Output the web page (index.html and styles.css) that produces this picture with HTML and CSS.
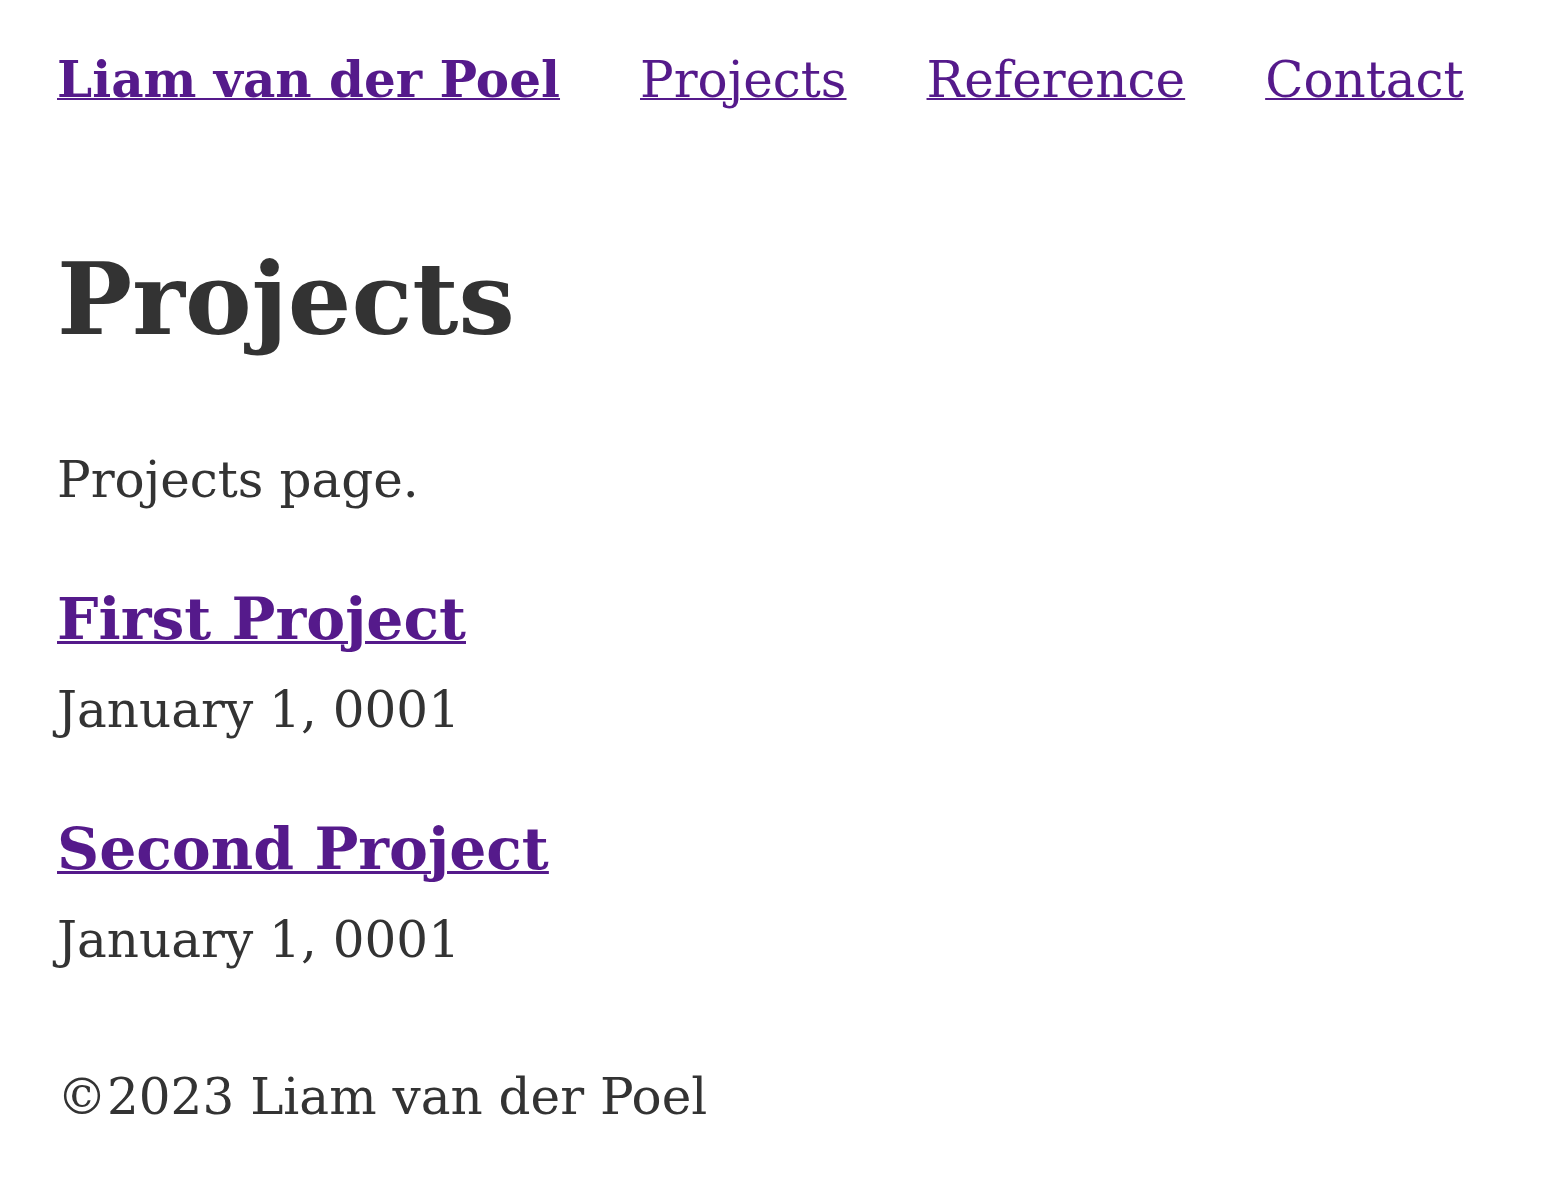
FILE: index.html
```html
<!DOCTYPE html>
<html lang="en">
<head>
<meta charset="utf-8">
<title>Projects | Liam van der Poel</title>
<link rel="stylesheet" href="styles.css">
</head>
<body>
<header class="site-header">
  <nav class="nav">
    <a class="brand" href="#">Liam van der Poel</a>
    <a href="#">Projects</a>
    <a href="#">Reference</a>
    <a href="#">Contact</a>
  </nav>
</header>
<main class="content">
  <h1 class="title">Projects</h1>
  <p class="intro">Projects page.</p>
  <article class="entry">
    <h2 class="entry-title"><a href="#">First Project</a></h2>
    <p class="entry-date">January 1, 0001</p>
  </article>
  <article class="entry">
    <h2 class="entry-title"><a href="#">Second Project</a></h2>
    <p class="entry-date">January 1, 0001</p>
  </article>
</main>
<footer class="site-footer">
  <p>©2023 Liam van der Poel</p>
</footer>
</body>
</html>
```
FILE: styles.css
```css
html, body {
  margin: 0;
  padding: 0;
  background: #fff;
}
body {
  font-family: "DejaVu Serif", serif;
  font-size: 50px;
  line-height: 1.4;
  color: #333;
  padding: 0 57px;
}
a {
  color: #551a8b;
  text-decoration-thickness: 2px;
}
.site-header {
  padding-top: 45px;
}
.nav {
  display: flex;
  gap: 80px;
}
.brand {
  font-weight: bold;
}
.title {
  font-size: 100px;
  font-weight: bold;
  margin: 114px 0 0;
  line-height: 1.4;
}
.intro {
  margin: 76px 0 0;
}
.entry-title {
  font-size: 58.4px;
  margin: 63px 0 0;
  line-height: 1.4;
}
.entry-title a {
  text-decoration-thickness: 3px;
}
.entry-date {
  margin: 15px 0 0;
}
.site-footer p {
  margin: 87px 0 0;
}
```
